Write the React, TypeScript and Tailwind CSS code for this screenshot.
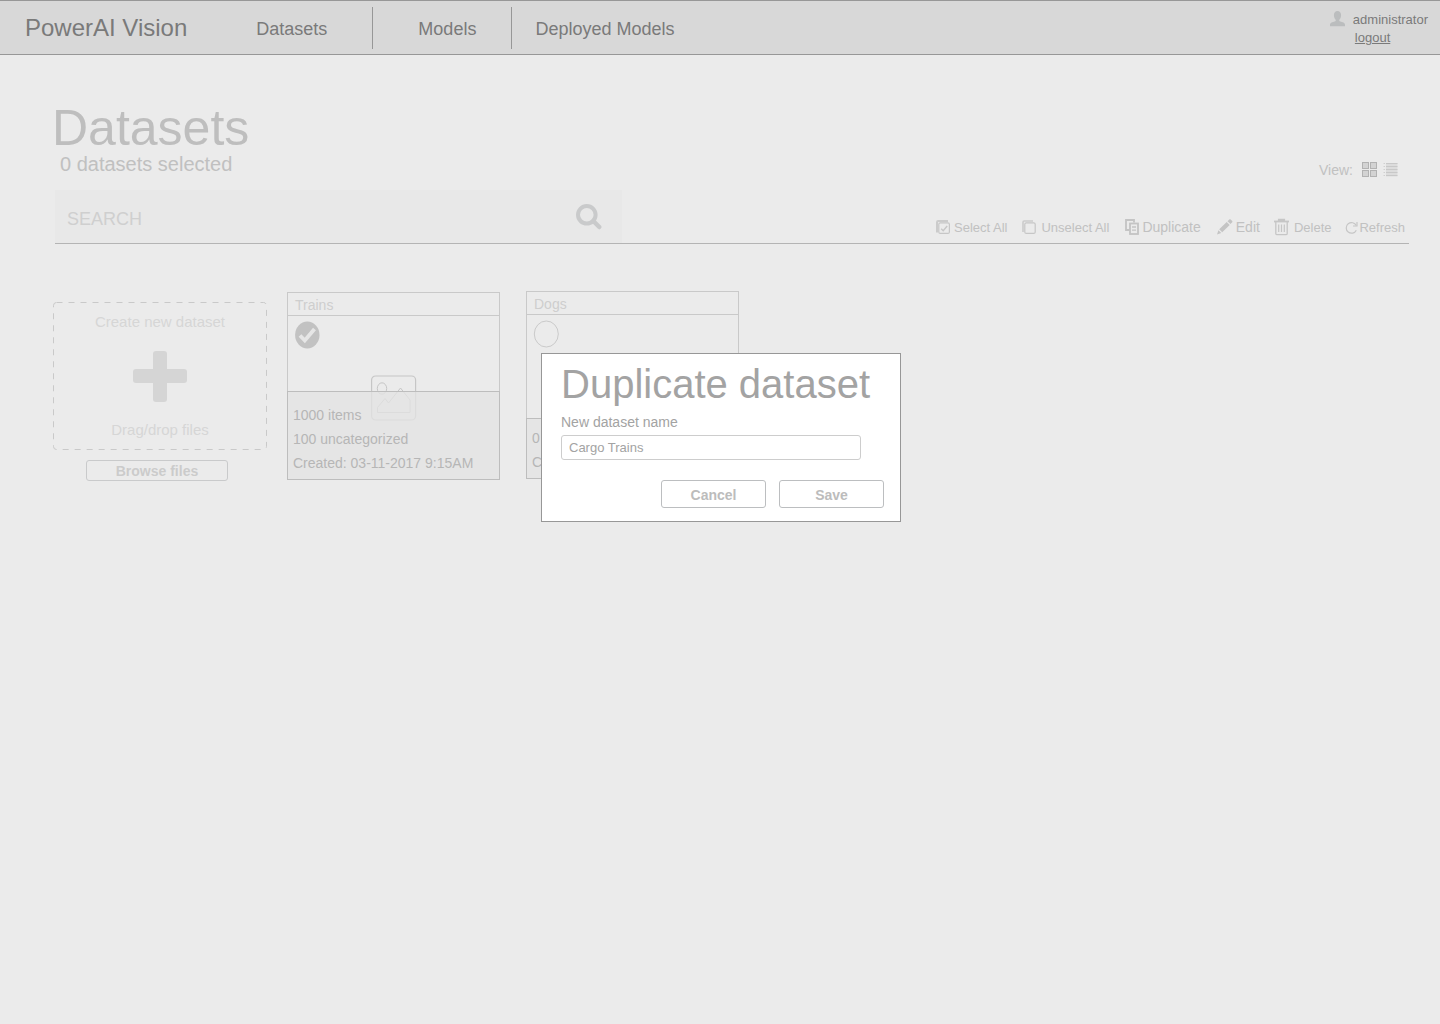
import React, { useState } from "react";

type IconProps = { className?: string };

const UserIcon = () => (
  <svg width="16" height="16" viewBox="0 0 16 16" fill="#bbbdbe" aria-hidden="true">
    <path d="M7.500 0C5.200 0 3.900 1.700 3.900 4c0 1.900.7 3.800 1.800 4.800.2.900-.1 1.500-1 1.800C2.500 11.300 0 11.700 0 14v1.300h15V14c0-2.300-2.500-2.700-4.700-3.400-.9-.3-1.200-.9-1-1.800 1.100-1 1.800-2.900 1.800-4.800C11.100 1.700 9.800 0 7.500 0z" />
  </svg>
);

const SearchIcon = () => (
  <svg width="28" height="28" viewBox="0 0 28 28" fill="none" stroke="#c9cacb" aria-hidden="true">
    <circle cx="11.800" cy="11.800" r="8.800" strokeWidth="4" />
    <path d="M18.300 18L24.300 24" strokeWidth="4.500" strokeLinecap="round" />
  </svg>
);

const GridIcon = () => (
  <svg width="16" height="16" viewBox="0 0 16 16" fill="#d3d3d3" stroke="#b2b2b2" aria-hidden="true">
    <rect x=".5" y=".5" width="6" height="6" />
    <rect x="8.500" y=".5" width="6" height="6" />
    <rect x=".5" y="8.500" width="6" height="6" />
    <rect x="8.500" y="8.500" width="6" height="6" />
  </svg>
);

const ListIcon = () => (
  <svg width="16" height="16" viewBox="0 0 16 16" fill="none" aria-hidden="true">
    <path d="M3 1h11.500v13.500H3z" fill="#dcdcdc" />
    <path d="M.5 1.500h1.500M.5 4.500h1.500M.5 7.500h1.500M.5 10.500h1.500M.5 13.500h1.500" stroke="#d0d0d0" />
    <path d="M3 1.500h11.500M3 4.500h11.500M3 7.500h11.500M3 10.500h11.500M3 13.500h11.500" stroke="#c8c8c8" />
  </svg>
);

const SelectAllIcon = () => (
  <svg width="18" height="16" viewBox="0 0 18 16" fill="none" stroke="#c6c6c6" aria-hidden="true">
    <path d="M1 12.500V2.200C1 1.500 1.500 1 2.200 1H12" strokeWidth="2" stroke="#cbcbcb" />
    <rect x="2.800" y="2.800" width="10.600" height="10.600" rx="1.500" strokeWidth="1.200" />
    <path d="M5.200 8.800l2 1.900 4-4.700" strokeWidth="1.400" />
  </svg>
);

const UnselectAllIcon = () => (
  <svg width="20" height="16" viewBox="-1 0 20 16" fill="none" stroke="#c6c6c6" aria-hidden="true">
    <path d="M1 12V2.200C1 1.500 1.500 1 2.200 1H11" strokeWidth="1.600" stroke="#cbcbcb" />
    <rect x="2.800" y="2.800" width="10.400" height="10.600" rx="1.500" strokeWidth="1.200" />
  </svg>
);

const DuplicateIcon = () => (
  <svg width="19" height="16" viewBox="-2 0 19 16" fill="none" stroke="#c4c4c4" aria-hidden="true">
    <path d="M4.500 11H1V1h8v2.500" strokeWidth="1.800" />
    <rect x="5" y="4.500" width="8" height="10.500" strokeWidth="1.800" />
    <path d="M7 8h4M7 11.200h4" strokeWidth="1.300" />
  </svg>
);

const EditIcon = () => (
  <svg width="21" height="16" viewBox="-2 0 21 16" fill="#c4c4c4" aria-hidden="true">
    <path d="M0 15.500l1.400-4.300 2.900 2.900zM2.200 10.300L9.700 3l3 2.900-7.500 7.400zM10.500 2.200L12.300.5c.4-.4.9-.4 1.300 0L15.200 2c.4.400.4.900 0 1.300l-1.700 1.800z" />
  </svg>
);

const DeleteIcon = () => (
  <svg width="20" height="20" viewBox="0 0 20 20" fill="none" stroke="#c6c6c6" aria-hidden="true">
    <path d="M0 3.500h15" strokeWidth="1.800" />
    <path d="M4.500 3V1.300h6V3" fill="#c6c6c6" strokeWidth="1.200" />
    <path d="M1.800 4v11.400c0 .8.500 1.300 1.300 1.300h8.800c.8 0 1.300-.5 1.300-1.300V4" strokeWidth="1.300" />
    <path d="M4.700 6.500V14M7.500 6.500V14M10.300 6.500V14" strokeWidth="1.200" />
  </svg>
);

const RefreshIcon = () => (
  <svg width="14" height="14" viewBox="0 0 14 14" fill="none" stroke="#c6c6c6" strokeWidth="1.200" aria-hidden="true">
    <path d="M11.300 4.600A5.300 5.300 0 1 0 11.300 9.200" />
    <path d="M12 1v4H8" />
  </svg>
);

const PlusIcon = () => (
  <svg width="54" height="52" viewBox="0 0 54 52" fill="#d5d5d5" aria-hidden="true">
    <rect x="20" y="1" width="14" height="51" rx="3" />
    <rect x="0" y="19" width="54" height="14" rx="3" />
  </svg>
);

const PictureIcon = ({ className }: IconProps) => (
  <svg className={className} width="46" height="46" viewBox="0 0 46 46" fill="none" stroke="#c6c6c6" aria-hidden="true">
    <rect x=".6" y="1" width="44" height="44" rx="4" strokeWidth="1.200" />
    <ellipse cx="11" cy="13.500" rx="4.700" ry="5.700" />
    <path d="M6.500 37.500v-5l7.500-9 3.500 4.500L29.500 13l9.500 12v12.500z" />
  </svg>
);

const smallTool = "text-[13px]";
const largeTool = "text-sm pb-px";

const tools = [
  { label: "Select All", icon: <SelectAllIcon />, size: smallTool },
  { label: "Unselect All", icon: <UnselectAllIcon />, size: smallTool },
  { label: "Duplicate", icon: <DuplicateIcon />, size: largeTool },
  { label: "Edit", icon: <EditIcon />, size: largeTool },
  { label: "Delete", icon: <DeleteIcon />, size: smallTool },
  { label: "Refresh", icon: <RefreshIcon />, size: smallTool },
];

type CardProps = {
  name: string;
  lines: string[];
  initiallyChecked?: boolean;
  className?: string;
};

function DatasetCard({ name, lines, initiallyChecked = false, className = "" }: CardProps) {
  const [checked, setChecked] = useState(initiallyChecked);
  return (
    <article className={`relative flex h-[188px] w-[213px] flex-col border border-[#c9c9c9] ${className}`}>
      <h2 className="h-[23px] border-b border-[#c9c9c9] px-[7px] text-sm leading-6 text-[#cecece]">{name}</h2>
      <label className="relative ml-[6px] mt-[5px] block h-7 w-[26px]">
        <input
          type="checkbox"
          aria-label={`Select ${name}`}
          checked={checked}
          onChange={(e) => setChecked(e.target.checked)}
          className="absolute inset-0 appearance-none"
        />
        <svg width="26" height="28" viewBox="0 0 26 28" fill="none" aria-hidden="true">
          {checked ? (
            <>
              <ellipse cx="13.300" cy="14" rx="12.200" ry="13.500" fill="#c2c2c2" />
              <path d="M6 14.500l4.800 5L20.500 8" stroke="#e6e6e6" strokeWidth="3.800" />
            </>
          ) : (
            <ellipse cx="13.300" cy="14" rx="12" ry="13" stroke="#cacaca" />
          )}
        </svg>
      </label>
      <PictureIcon className="absolute left-[83px] top-[82px]" />
      <div
        className={`relative -mx-px -mb-px mt-auto border border-[#bdbdbd] bg-[#e3e3e3]/75 px-[5px] pb-1 text-sm leading-6 text-[#b6b6b6] ${
          lines.length > 2 ? "pt-[11px]" : "pt-[7px]"
        }`}
      >
        {lines.map((line) => (
          <p key={line}>{line}</p>
        ))}
      </div>
    </article>
  );
}

function DuplicateDialog() {
  const [name, setName] = useState("Cargo Trains");
  const buttonClass =
    "h-7 w-[105px] rounded-[3px] border border-[#bcbec0] pt-px text-sm font-bold text-[#bcbcbc]";
  return (
    <div className="fixed inset-0 flex items-start justify-center pl-0.5 pt-[353px]">
      <form
        role="dialog"
        aria-labelledby="dialog-title"
        onSubmit={(e) => e.preventDefault()}
        className="w-[360px] border border-[#979797] bg-white pb-[13px] pl-[19px] pr-4 pt-2"
      >
        <h2 id="dialog-title" className="whitespace-nowrap text-[40px] leading-[44px] text-[#a3a3a3]">
          Duplicate dataset
        </h2>
        <label htmlFor="dataset-name" className="mt-[6px] block text-sm leading-5 text-[#a3a3a3]">
          New dataset name
        </label>
        <input
          id="dataset-name"
          value={name}
          onChange={(e) => setName(e.target.value)}
          className="mt-[3px] block h-[25px] w-[300px] rounded-[3px] border border-[#cdcdcd] px-[7px] text-[13px] text-[#a3a3a3] outline-none"
        />
        <div className="mt-5 flex justify-end gap-[13px]">
          <button type="button" className={buttonClass}>Cancel</button>
          <button type="submit" className={buttonClass}>Save</button>
        </div>
      </form>
    </div>
  );
}

export default function App() {
  return (
    <div className="min-h-screen bg-[#ebebeb] font-['Liberation_Sans',Arial,sans-serif]">
      <header className="flex h-[55px] items-center justify-between border-y border-[#979797] bg-[#d8d8d8] pl-[25px] pr-3 text-[#7a7a7a]">
        <div className="flex items-center whitespace-nowrap">
          <span className="text-2xl">PowerAI Vision</span>
          <nav className="ml-[69px] flex text-lg leading-10">
            <a href="#datasets" className="border-r border-[#979797] pr-[45px] pt-0.5">Datasets</a>
            <a href="#models" className="border-r border-[#979797] pl-[45px] pr-[35px] pt-0.5">Models</a>
            <a href="#deployed" className="pl-[23px] pt-0.5">Deployed Models</a>
          </nav>
        </div>
        <div className="flex gap-[7px] pt-0.5 text-[13px] leading-[18px]">
          <UserIcon />
          <div className="flex flex-col items-start">
            <span>administrator</span>
            <a href="#logout" className="ml-0.5 underline">logout</a>
          </div>
        </div>
      </header>

      <main className="pl-[53px] pr-[31px] pt-[49px]">
        <h1 className="-ml-px text-[50px] leading-[48px] text-[#bebebe]">Datasets</h1>
        <div className="ml-0.5 flex items-end justify-between border-b border-[#b4b4b4]">
          <div className="w-[567px]">
            <p className="pl-[5px] text-xl leading-6 text-[#c0c0c0]">0 datasets selected</p>
            <form
              role="search"
              onSubmit={(e) => e.preventDefault()}
              className="mt-[14px] flex h-[53px] items-center bg-[#e8e8e8] pl-3 pr-[19px]"
            >
              <input
                type="search"
                aria-label="Search datasets"
                placeholder="SEARCH"
                className="mt-[5px] min-w-0 flex-1 bg-transparent text-lg outline-none placeholder:text-[#cfcfcf]"
              />
              <button type="submit" aria-label="Search">
                <SearchIcon />
              </button>
            </form>
          </div>
          <div className="flex flex-col items-end text-[#c1c1c1]">
            <div className="mb-[37px] mr-[10px] flex items-center text-sm leading-5">
              <span className="mr-[9px]">View:</span>
              <button type="button" aria-label="Grid view" className="mr-[5px]"><GridIcon /></button>
              <button type="button" aria-label="List view"><ListIcon /></button>
            </div>
            <div className="mb-[5px] mr-1 flex items-end gap-[14px]">
              {tools.map((tool) => (
                <button key={tool.label} type="button" className={`flex items-center whitespace-nowrap leading-5 ${tool.size}`}>
                  {tool.icon}
                  {tool.label}
                </button>
              ))}
            </div>
          </div>
        </div>

        <div className="mt-[47px] flex items-start">
          <section className="mt-[11px] flex w-[214px] flex-col items-center text-[15px] leading-5 text-[#d6d6d6]">
            <div className="relative flex h-[148px] w-full flex-col items-center justify-between pb-[10px] pt-[10px]">
              <svg className="absolute inset-0" width="214" height="148" fill="none" aria-hidden="true">
                <rect x=".5" y=".5" width="213" height="147" rx="3" stroke="#c9c9c9" strokeDasharray="6 6" />
              </svg>
              <p>Create new dataset</p>
              <PlusIcon />
              <p>Drag/drop files</p>
            </div>
            <button
              type="button"
              className="mr-[6px] mt-[10px] h-[21px] w-[142px] rounded-[3px] border border-[#c9cacb] text-sm leading-5 font-bold text-[#cbcbcb]"
            >
              Browse files
            </button>
          </section>
          <DatasetCard
            name="Trains"
            initiallyChecked
            lines={["1000 items", "100 uncategorized", "Created: 03-11-2017 9:15AM"]}
            className="ml-5 mt-px"
          />
          <DatasetCard name="Dogs" lines={["0 items", "Created: 03-11-2017 9:15AM"]} className="ml-[26px]" />
        </div>
      </main>
      <DuplicateDialog />
    </div>
  );
}
